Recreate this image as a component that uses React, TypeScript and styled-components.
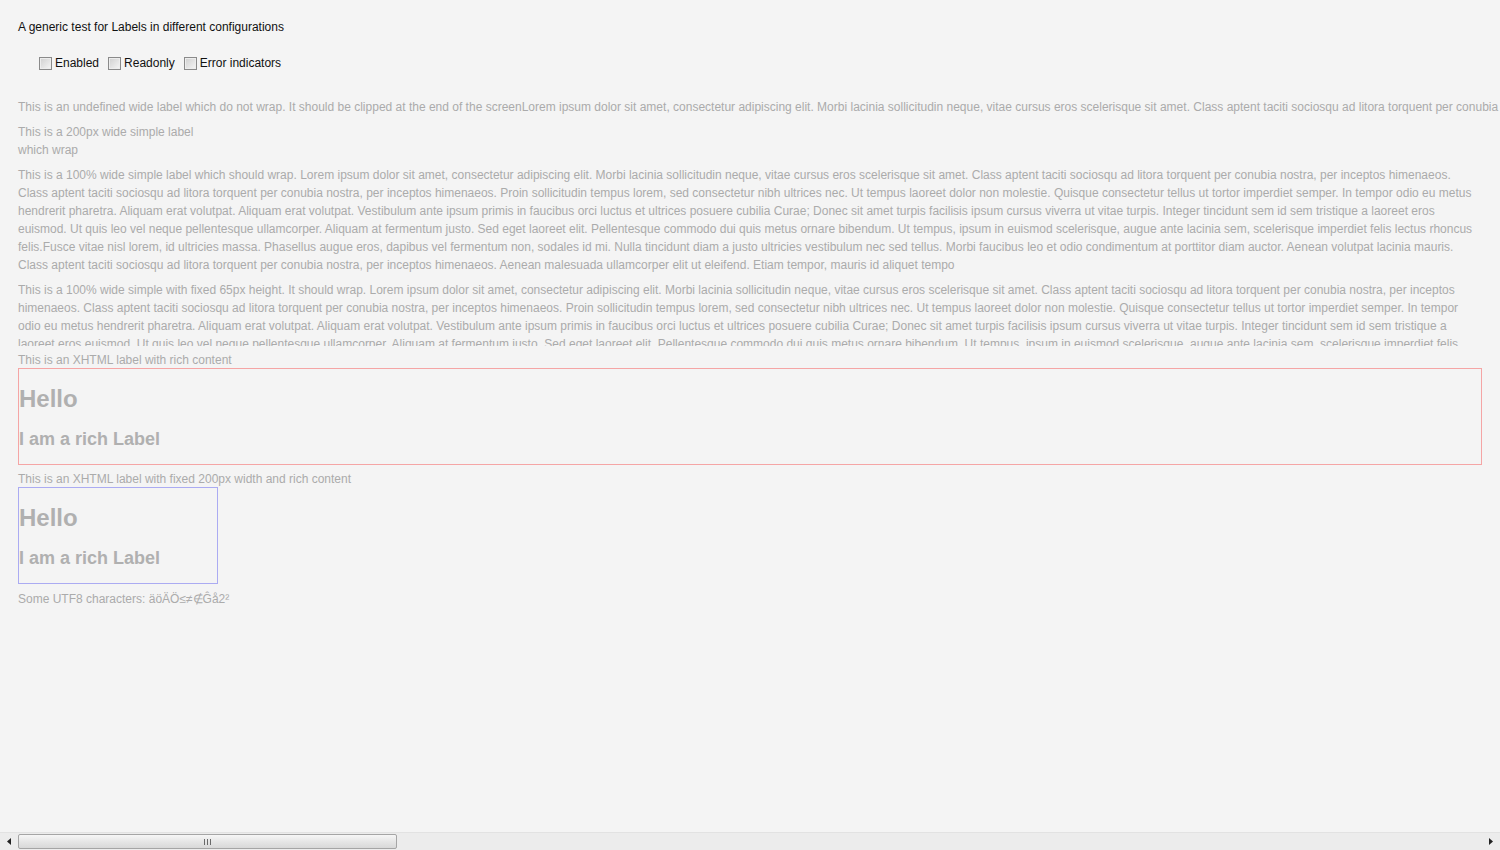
import styled, { createGlobalStyle } from 'styled-components';

const LOREM =
  'Lorem ipsum dolor sit amet, consectetur adipiscing elit. Morbi lacinia sollicitudin neque, vitae cursus eros scelerisque sit amet. Class aptent taciti sociosqu ad litora torquent per conubia nostra, per inceptos himenaeos. Class aptent taciti sociosqu ad litora torquent per conubia nostra, per inceptos himenaeos. Proin sollicitudin tempus lorem, sed consectetur nibh ultrices nec. Ut tempus laoreet dolor non molestie. Quisque consectetur tellus ut tortor imperdiet semper. In tempor odio eu metus hendrerit pharetra. Aliquam erat volutpat. Aliquam erat volutpat. Vestibulum ante ipsum primis in faucibus orci luctus et ultrices posuere cubilia Curae; Donec sit amet turpis facilisis ipsum cursus viverra ut vitae turpis. Integer tincidunt sem id sem tristique a laoreet eros euismod. Ut quis leo vel neque pellentesque ullamcorper. Aliquam at fermentum justo. Sed eget laoreet elit. Pellentesque commodo dui quis metus ornare bibendum. Ut tempus, ipsum in euismod scelerisque, augue ante lacinia sem, scelerisque imperdiet felis lectus rhoncus felis.Fusce vitae nisl lorem, id ultricies massa. Phasellus augue eros, dapibus vel fermentum non, sodales id mi. Nulla tincidunt diam a justo ultricies vestibulum nec sed tellus. Morbi faucibus leo et odio condimentum at porttitor diam auctor. Aenean volutpat lacinia mauris. Class aptent taciti sociosqu ad litora torquent per conubia nostra, per inceptos himenaeos. Aenean malesuada ullamcorper elit ut eleifend. Etiam tempor, mauris id aliquet tempo';

const options = ['Enabled', 'Readonly', 'Error indicators'];

function App() {
  return (
    <Page>
      <GlobalStyle />
      <Content>
        <Title>A generic test for Labels in different configurations</Title>
        <Options>
          {options.map(o => (
            <Option key={o}>
              <Box />
              {o}
            </Option>
          ))}
        </Options>
        <Labels>
          <Label nowrap>
            This is an undefined wide label which do not wrap. It should be clipped at the end of the screen{LOREM}
          </Label>
          <Label width="200px">This is a 200px wide simple label which wrap</Label>
          <Label>This is a 100% wide simple label which should wrap. {LOREM}</Label>
          <Label fixedHeight="65px">
            This is a 100% wide simple with fixed 65px height. It should wrap. {LOREM}
          </Label>
          <RichGroup>
            <Caption>This is an XHTML label with rich content</Caption>
            <RichBox color="#f5a5a5">
              <h1>Hello</h1>
              <h2>I am a rich Label</h2>
            </RichBox>
          </RichGroup>
          <RichGroup>
            <Caption>This is an XHTML label with fixed 200px width and rich content</Caption>
            <RichBox color="#ababf2" width="200px">
              <h1>Hello</h1>
              <h2>I am a rich Label</h2>
            </RichBox>
          </RichGroup>
          <Caption>Some UTF8 characters: äöÄÖ≤≠∉Ĝå2²</Caption>
        </Labels>
      </Content>
      <ScrollBar>
        <Arrow>
          <svg width="4" height="7" viewBox="0 0 4 7">
            <path d="M4 0 L0 3.5 L4 7 Z" fill="#222" />
          </svg>
        </Arrow>
        <Track>
          <Thumb>
            <Grip />
          </Thumb>
        </Track>
        <Arrow>
          <svg width="4" height="7" viewBox="0 0 4 7">
            <path d="M0 0 L4 3.5 L0 7 Z" fill="#222" />
          </svg>
        </Arrow>
      </ScrollBar>
    </Page>
  );
}

// Styled Components
const GlobalStyle = createGlobalStyle`
  html, body {
    margin: 0;
    padding: 0;
    background: #f4f4f4;
    overflow: hidden;
  }
`;

const Page = styled.div`
  height: 850px;
  display: flex;
  flex-direction: column;
  overflow: hidden;
  font-family: 'Liberation Sans', Arial, sans-serif;
  font-size: 12px;
  background: #f4f4f4;
`;

const Content = styled.div`
  flex: 1;
  min-height: 0;
  overflow: hidden;
  padding: 18px 18px 0;
`;

const Title = styled.div`
  color: #111;
  line-height: 18px;
`;

const Options = styled.div`
  display: flex;
  gap: 9px;
  margin: 18px 0 0 21px;
  height: 18px;
  align-items: center;
  color: #111;
`;

const Option = styled.label`
  display: flex;
  align-items: center;
  gap: 3px;
`;

const Box = styled.span`
  width: 11px;
  height: 11px;
  border: 1px solid #8a8a8a;
  background: linear-gradient(135deg, #cfcfcf 0%, #e6e6e6 60%, #f6f6f6 100%);
  box-shadow: inset 0 0 0 1px #ededed;
`;

const Labels = styled.div`
  margin-top: 26px;
  display: flex;
  flex-direction: column;
  gap: 7px;
  color: #ababab;
`;

const Label = styled.div<{ nowrap?: boolean; width?: string; fixedHeight?: string }>`
  line-height: 18px;
  white-space: ${p => (p.nowrap ? 'nowrap' : 'normal')};
  width: ${p => p.width || 'auto'};
  height: ${p => p.fixedHeight || 'auto'};
  overflow: ${p => (p.fixedHeight ? 'hidden' : 'visible')};
`;

const RichGroup = styled.div`
  display: flex;
  flex-direction: column;
  margin-top: -1px;
`;

const Caption = styled.div`
  line-height: 16px;
`;

const RichBox = styled.div<{ color: string; width?: string }>`
  border: 1px solid ${p => p.color};
  width: ${p => (p.width ? `calc(${p.width} - 2px)` : 'auto')};
  color: #b0b0b0;

  h1 {
    font-size: 24px;
    font-weight: bold;
    margin: 16px 0;
  }

  h2 {
    font-size: 18px;
    font-weight: bold;
    margin: 15px 0 14px;
  }
`;

const ScrollBar = styled.div`
  height: 17px;
  display: flex;
  align-items: stretch;
  background: #ececec;
  border-top: 1px solid #e2e2e2;
`;

const Arrow = styled.div`
  width: 18px;
  display: flex;
  align-items: center;
  justify-content: center;
`;

const Track = styled.div`
  flex: 1;
  display: flex;
  padding: 1px 0;
`;

const Thumb = styled.div`
  width: 377px;
  border: 1px solid #a5a5a5;
  border-radius: 2px;
  background: linear-gradient(to bottom, #f6f6f6 0%, #e6e6e6 50%, #d8d8d8 100%);
  display: flex;
  align-items: center;
  justify-content: center;
`;

const Grip = styled.span`
  width: 7px;
  height: 6px;
  background: repeating-linear-gradient(
    to right,
    #6a6a6a 0,
    #6a6a6a 1px,
    transparent 1px,
    transparent 3px
  );
`;

export default App;
